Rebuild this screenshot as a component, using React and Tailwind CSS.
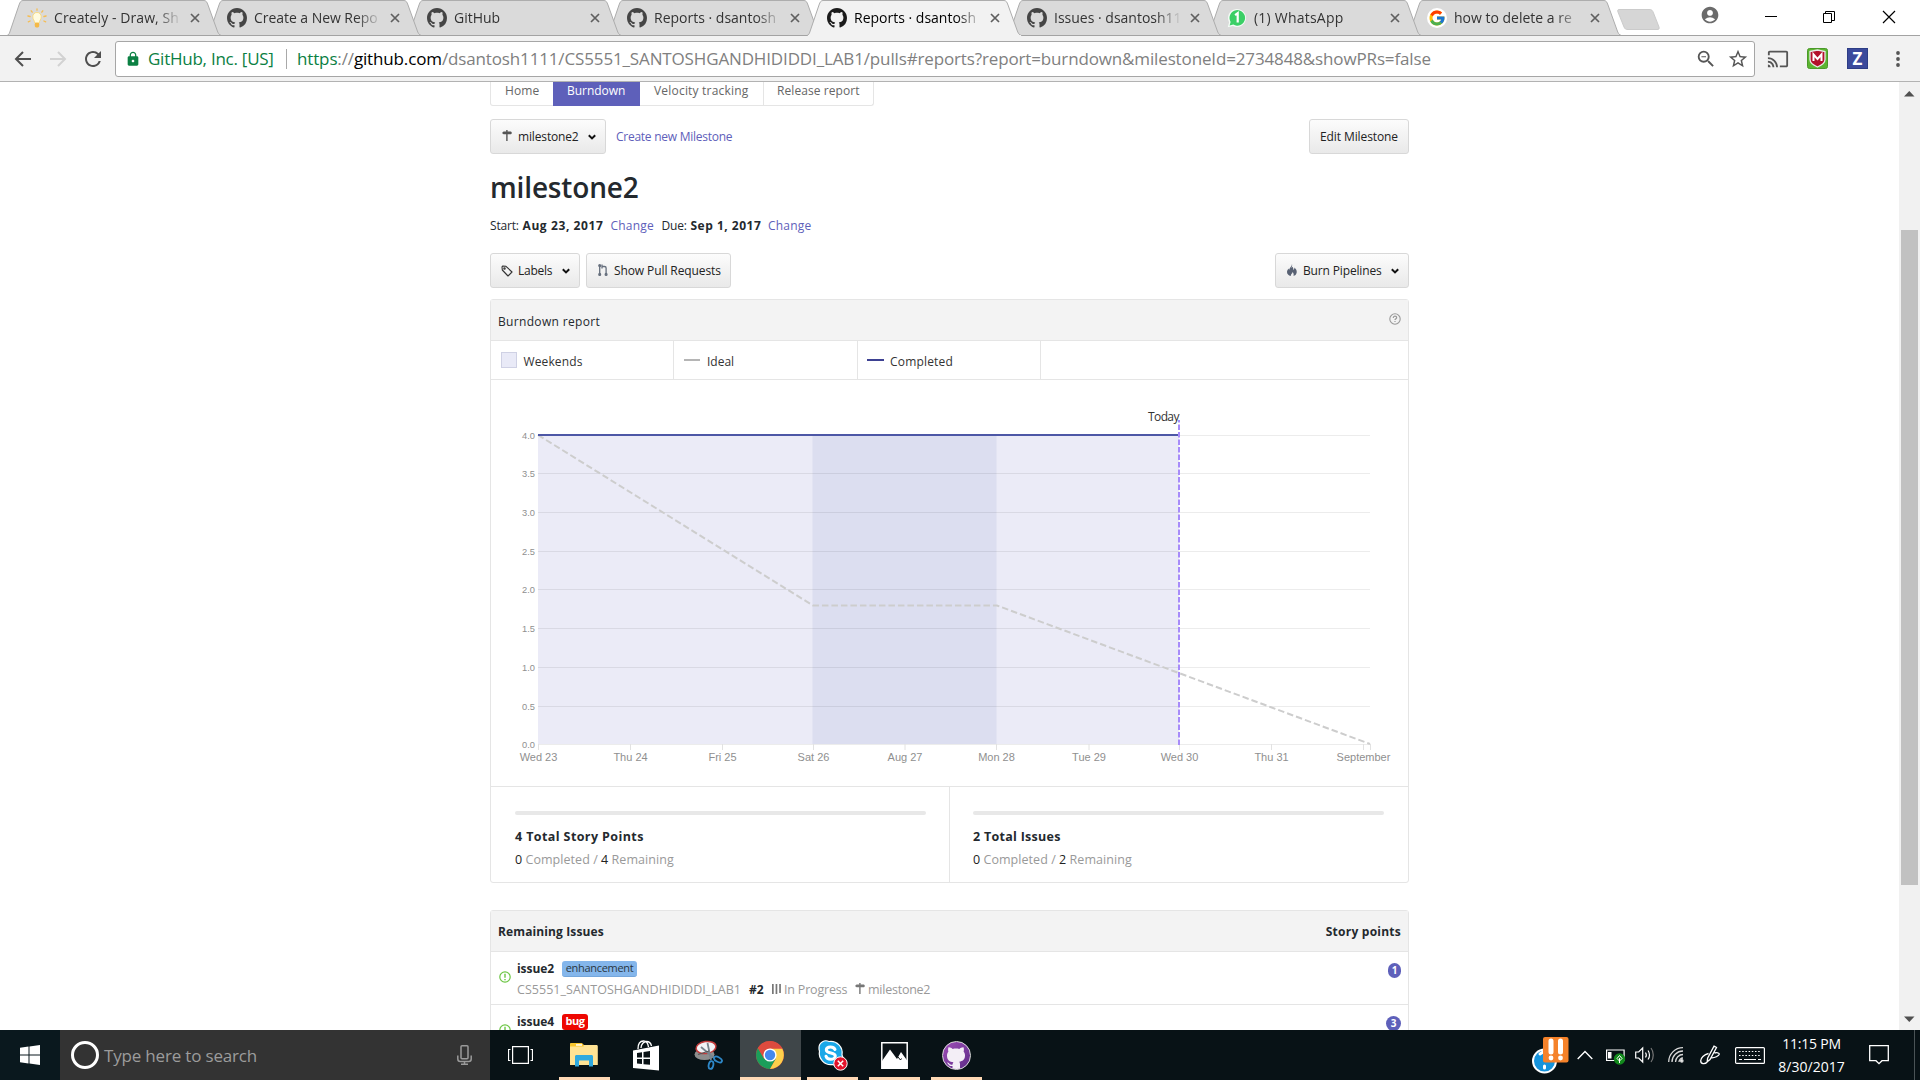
import React from 'react';
import { FcGoogle } from 'react-icons/fc';
import { MdCast, MdAccountCircle, MdLock, MdStarBorder, MdZoomOut, MdRefresh } from 'react-icons/md';

function Octocat({ className, fill = 'currentColor' }) {
  return (
    <svg viewBox="0 0 16 16" className={className} fill={fill}>
      <path d="M8 0C3.58 0 0 3.58 0 8c0 3.54 2.29 6.53 5.47 7.59.4.07.55-.17.55-.38 0-.19-.01-.82-.01-1.49-2.01.37-2.53-.49-2.69-.94-.09-.23-.48-.94-.82-1.13-.28-.15-.68-.52-.01-.53.63-.01 1.08.58 1.23.82.72 1.21 1.87.87 2.33.66.07-.52.28-.87.51-1.07-1.78-.2-3.64-.89-3.64-3.95 0-.87.31-1.59.82-2.15-.08-.2-.36-1.02.08-2.12 0 0 .67-.21 2.2.82.64-.18 1.32-.27 2-.27s1.36.09 2 .27c1.53-1.04 2.2-.82 2.2-.82.44 1.1.16 1.92.08 2.12.51.56.82 1.27.82 2.15 0 3.07-1.87 3.75-3.65 3.95.29.25.54.73.54 1.48 0 1.07-.01 1.93-.01 2.2 0 .21.15.46.55.38A8.01 8.01 0 0 0 16 8c0-4.42-3.58-8-8-8z" />
    </svg>
  );
}

function Bulb() {
  return (
    <svg viewBox="0 0 20 20" className="h-5 w-5">
      <g stroke="#f6bd52" strokeWidth="1.3" strokeLinecap="round">
        <path d="M10 .8v1.400M4.200 2.800l1 1.400M15.800 2.800l-1 1.400M.9 8l2.200.500M19.100 8l-2.200.500M1.300 13.800l1.800-.800M18.700 13.800l-1.800-.800" />
      </g>
      <path d="M10 4.500a4 4 0 0 0-4.200 4.300c0 2.600 1.700 3.600 2 6.200h4.400c.3-2.600 2-3.600 2-6.200A4 4 0 0 0 10 4.500z" fill="#fffbe0" stroke="#fbd878" strokeWidth=".9" />
      <rect x="7.800" y="14.800" width="4.400" height="4.700" rx="1.400" fill="#f5b946" />
    </svg>
  );
}

function WhatsAppBadge() {
  return (
    <svg viewBox="0 0 20 20" className="h-5 w-5">
      <path d="M.8 19.2l1.3-4.9A9 9 0 1 1 5.900 18z" fill="#f4fbf6" />
      <path d="M2.600 17.500l1-3.600a7.800 7.800 0 1 1 2.700 2.700z" fill="#3bcf66" />
      <path d="M8.100 7.200l2.600-2v9.400" fill="none" stroke="#fff" strokeWidth="2.2" />
    </svg>
  );
}

function GoogleIcon() {
  return (
    <span className="flex h-5 w-5 items-center justify-center rounded-full bg-white">
      <FcGoogle className="h-[18px] w-[18px]" />
    </span>
  );
}

const tabs = [
  { title: 'Creately - Draw, Sh', icon: <Bulb />, z: 'z-[7]', track: 'tracking-[0.08px]' },
  { title: 'Create a New Repo', icon: <Octocat className="h-5 w-5 text-[#454545]" />, z: 'z-[6]', track: 'tracking-[-0.05px]' },
  { title: 'GitHub', icon: <Octocat className="h-5 w-5 text-[#454545]" />, z: 'z-[5]', track: 'tracking-[0px]' },
  { title: 'Reports · dsantosh', icon: <Octocat className="h-5 w-5 text-[#454545]" />, z: 'z-[4]', track: 'tracking-[0px]' },
  { title: 'Reports · dsantosh', icon: <Octocat className="h-5 w-5 text-[#1b1b1b]" />, z: 'z-10', active: true, track: 'tracking-[0px]' },
  { title: 'Issues · dsantosh11', icon: <Octocat className="h-5 w-5 text-[#454545]" />, z: 'z-[3]', track: 'tracking-[0px]' },
  { title: '(1) WhatsApp', icon: <WhatsAppBadge />, z: 'z-[2]', track: 'tracking-[0.22px]' },
  { title: 'how to delete a re', icon: <GoogleIcon />, z: 'z-[1]', track: 'tracking-[0px]' },
];

function BrowserTab({ tab }) {
  return (
    <div className={`relative h-9 w-[200px] shrink-0 ${tab.z}`}>
      <svg className="absolute top-0 left-0" width="216" height="36" viewBox="0 0 216 36">
        <path
          d="M0 35.5 C2 35 2.5 33 3.5 30 L12 5 C13 2 14 .5 16 .5 L197 .5 C199 .5 200 2 201 5 L210 30 C211 33 212 35 214.5 35.5"
          fill={tab.active ? '#f2f2f2' : '#dadada'}
          stroke="#adadad"
        />
        {tab.active ? <path d="M1 35.500H214" stroke="#f2f2f2" /> : <path d="M0 35.500H215" stroke="#a3a3a3" />}
      </svg>
      <div className="relative flex h-9 items-center pl-5">
        {tab.icon}
        <div className={`ml-[7px] h-6 w-[128px] text-[14px] leading-6 whitespace-nowrap [mask-image:linear-gradient(to_right,black_80%,transparent)] ${tab.active ? 'text-black' : 'text-[#333]'} ${tab.track}`}>
          {tab.title}
        </div>
        <svg className="ml-2" width="10" height="10" viewBox="0 0 10 10">
          <path d="M1 1l8 8M9 1l-8 8" stroke="#5f5f5f" strokeWidth="1.7" />
        </svg>
      </div>
    </div>
  );
}

function TabStrip() {
  return (
    <div className="flex h-9 border-b border-[#a3a3a3] bg-white pl-[7px]">
      {tabs.map((t, i) => <BrowserTab key={i} tab={t} />)}
      <svg className="mt-[9px] ml-[10px]" width="44" height="22" viewBox="0 0 44 22">
        <path d="M2 .5H32C35 .5 35.500 1.500 36.500 4L42 18C42.500 20 42 20.500 40 20.500H11C8.500 20.500 8 20 7 18L1 3C.5 1.500 .5 .5 2 .5z" fill="#d6d6d6" stroke="#cbcbcb" />
      </svg>
      <div className="ml-[39px] flex h-8 items-start">
        <MdAccountCircle className="mt-[5px] h-5 w-5 text-[#6b6b6b]" />
        <svg className="mt-2.5 ml-[44px]" width="14" height="14" viewBox="0 0 14 14"><path d="M1 6.500h12" stroke="#000" /></svg>
        <svg className="mt-2.5 ml-11" width="14" height="14" viewBox="0 0 14 14" fill="none" stroke="#000">
          <path d="M1.500 3.500h8v9h-8zM3.500 3.500v-2h9v9h-3" />
        </svg>
        <svg className="mt-2.5 ml-[46px]" width="14" height="14" viewBox="0 0 14 14"><path d="M1 1l12 12M13 1L1 13" stroke="#000" strokeWidth="1.200" /></svg>
      </div>
    </div>
  );
}

function Toolbar() {
  return (
    <div className="flex h-[46px] items-center border-b border-[#b2b2b2] bg-[#f2f2f2] pl-[14px]">
      <svg width="18" height="16" viewBox="0 0 18 16" fill="none" stroke="#505050" strokeWidth="2"><path d="M17 8H2M9 1L2 8l7 7" /></svg>
      <svg className="ml-[17px]" width="18" height="16" viewBox="0 0 18 16" fill="none" stroke="#d2d2d2" strokeWidth="2"><path d="M1 8h15M9 1l7 7-7 7" /></svg>
      <MdRefresh className="ml-[14px] h-6 w-6 text-[#505050]" />
      <div className="ml-[10px] flex h-9 w-[1640px] items-center rounded-[3px] border border-[#a6a6a6] bg-white pl-[9px]">
        <MdLock className="h-4 w-4 text-[#0b8043]" />
        <span className="ml-[7px] w-[138px] text-[17px] tracking-[-0.25px] whitespace-nowrap text-[#0b8043]">GitHub, Inc. [US]</span>
        <span className="h-5 w-px bg-[#a9a9a9]" />
        <span className="ml-[10px] text-[17px] tracking-[-0.14px] whitespace-nowrap text-[#808080]">
          <span className="text-[#0b8043]">https</span>://<span className="text-black">github.com</span>/dsantosh1111/CS5551_SANTOSHGANDHIDIDDI_LAB1/pulls#reports?report=burndown&amp;milestoneId=2734848&amp;showPRs=false
        </span>
        <span className="ml-auto flex items-center gap-[10px] pr-[5px]">
          <MdZoomOut className="h-[22px] w-[22px] text-[#555]" />
          <MdStarBorder className="h-[22px] w-[22px] text-[#555]" />
        </span>
      </div>
      <MdCast className="ml-3 h-[22px] w-[22px] text-[#555]" />
      <svg className="ml-[18px]" width="21" height="21" viewBox="0 0 21 21">
        <rect x=".5" y=".5" width="20" height="20" rx="2" fill="#5cb531" stroke="#4b9a2a" />
        <path d="M3 3.500l7.500-1.500L18 3.500v8c0 3.500-4 6-7.500 7.500C7 17.500 3 15 3 11.500z" fill="#b3112c" stroke="#e8e8e8" strokeWidth="1.300" />
        <path d="M6.500 13V6.500l4 4.500 4-4.500V13" fill="none" stroke="#fff" strokeWidth="2" />
      </svg>
      <span className="ml-[19px] flex h-[21px] w-[21px] items-center justify-center border border-[#2d3d85] bg-[#3b4a9c] text-[17px] leading-none font-bold text-white">Z</span>
      <svg className="ml-[27px]" width="6" height="18" viewBox="0 0 6 18" fill="#555"><circle cx="3" cy="3" r="1.900" /><circle cx="3" cy="9" r="1.900" /><circle cx="3" cy="15" r="1.900" /></svg>
    </div>
  );
}

function Signpost({ className }) {
  return (
    <svg className={className} width="10" height="12" viewBox="0 0 10 12" fill="currentColor">
      <path d="M0 3l1.500-1.500H4.200V0h1.400v1.500H9L10 3 9 4.200H5.600V11H4.200V4.200H1.500z" />
    </svg>
  );
}

function Chevron({ className }) {
  return <svg className={className} width="8" height="6" viewBox="0 0 8 6" fill="none" stroke="#111" strokeWidth="2"><path d="M.8 1.200L4 4.400l3.200-3.200" /></svg>;
}

function Button({ className, children }) {
  return (
    <button className={`flex h-[35px] items-center rounded-[3px] border border-[#d8d8d8] bg-linear-to-b from-[#fcfcfc] to-[#e9e9e9] text-[12px] font-medium whitespace-nowrap text-[#222] ${className}`}>
      {children}
    </button>
  );
}

const days = [
  [538.5, 'Wed 23'], [630.5, 'Thu 24'], [722.5, 'Fri 25'], [813.5, 'Sat 26'], [905, 'Aug 27'],
  [996.5, 'Mon 28'], [1089, 'Tue 29'], [1179.5, 'Wed 30'], [1271.5, 'Thu 31'], [1363.5, 'September'],
];
const levels = [
  ['4.0', 435.5], ['3.5', 473.5], ['3.0', 512.5], ['2.5', 551.5], ['2.0', 589.5],
  ['1.5', 628.5], ['1.0', 667.5], ['0.5', 706.5], ['0.0', 744.5],
];

function BurndownChart() {
  return (
    <svg className="block" width="917" height="406" viewBox="491 380 917 406">
      <rect x="538" y="435" width="641" height="309" fill="#ebebf7" />
      <rect x="812.500" y="435" width="184" height="309" fill="#dcdef0" />
      {levels.map(([l, y]) => (
        <g key={l}>
          <path d={`M538 ${y}H1370`} stroke="#000" strokeOpacity=".075" />
          <text x="535" y={y + 3.5} textAnchor="end" fontSize="9.300" fill="#8f8f8f" fontFamily="Liberation Sans, sans-serif">{l}</text>
        </g>
      ))}
      {days.map(([x, d]) => (
        <g key={d}>
          <path d={`M${x} 744v6`} stroke="#e2e2e2" />
          <text x={x} y="761" textAnchor="middle" fontSize="11" fill="#8f8f8f" fontFamily="Liberation Sans, sans-serif">{d}</text>
        </g>
      ))}
      <path d="M1370.500 744v6" stroke="#e2e2e2" />
      <path d="M538 435L813 605.500H997L1370 744" fill="none" stroke="#cdcdcd" strokeWidth="2" strokeDasharray="6.500 3" />
      <path d="M538 435H1180" stroke="#4d57a6" strokeWidth="2" />
      <path d="M1179 420V745" stroke="#a78bfa" strokeWidth="2" strokeDasharray="5.500 2" strokeDashoffset="3" />
      <text x="1148" y="421" fontSize="12" letterSpacing="-.6" fill="#333" fontFamily="Open Sans, sans-serif">Today</text>
    </svg>
  );
}

function Stat({ title, track, remaining, className }) {
  return (
    <div className={`pt-6 ${className}`}>
      <div className="h-1 rounded-full bg-[#e8e8e8]" />
      <div className={`mt-[13px] text-[12.5px] leading-[18px] font-bold text-[#24292e] ${track}`}>{title}</div>
      <div className="mt-[5px] text-[12.5px] leading-[18px] tracking-[0.05px] text-[#999]">
        <span className="font-medium text-[#222]">0</span> Completed / <span className="font-medium text-[#222]">{remaining}</span> Remaining
      </div>
    </div>
  );
}

function OpenIcon() {
  return (
    <svg width="12" height="12" viewBox="0 0 12 12" fill="none" stroke="#6cc644"><circle cx="6" cy="6" r="5.200" strokeWidth="1.200" /><path d="M6 2.800v4M6 7.900v1.400" strokeWidth="1.400" /></svg>
  );
}

function Issue({ name, badge, badgeClass, number, points, pointClass }) {
  return (
    <div className="flex h-[53px] shrink-0 border-b border-[#e5e5e5] pt-2 pr-[7px] pl-2">
      <div className="w-[18px] pt-[11px]"><OpenIcon /></div>
      <div>
        <div className="flex h-[17px] items-center text-[12px] font-bold text-[#24292e]">
          <span className="w-[45px] tracking-[-0.07px]">{name}</span>
          <span className={`flex h-4 items-center justify-center rounded-[3px] text-[11px] ${badgeClass}`}>{badge}</span>
        </div>
        <div className="mt-[4px] flex h-[18px] items-center text-[12.5px] whitespace-nowrap text-[#999]">
          <span className="w-[232px] tracking-[0.03px]">CS5551_SANTOSHGANDHIDIDDI_LAB1</span>
          <span className="w-[23px] text-[12px] font-bold text-[#24292e]">{number}</span>
          <svg className="mb-0.5" width="9" height="10" viewBox="0 0 9 10" fill="#777"><path d="M0 0h1.700v10H0zM3.600 0h1.700v10H3.600zM7.200 0h1.700v9H7.200z" /></svg>
          <span className="ml-[3px] w-[71px] tracking-[-0.19px]">In Progress</span>
          <Signpost className="mb-0.5 text-[#777]" />
          <span className="ml-[3px] tracking-[-0.24px]">milestone2</span>
        </div>
      </div>
      <span className={`mt-[3px] ml-auto flex h-[15px] items-center justify-center rounded-full bg-[#5e60ba] text-[10px] font-bold text-white ${pointClass}`}>{points}</span>
    </div>
  );
}

function Page() {
  return (
    <main className="ml-[490px] flex h-full w-[919px] flex-col">
      <div className="flex h-6 w-[384px] shrink-0 rounded-b-[3px] border border-t-0 border-[#e5e5e5] text-[12px] leading-[18px] text-[#666]">
        <span className="w-[62px] pl-[14px] tracking-[0.14px]">Home</span>
        <span className="h-6 w-[87px] bg-[#5e60ba] pl-[14px] font-medium tracking-[-0.04px] text-white">Burndown</span>
        <span className="w-[124px] border-r border-[#e5e5e5] pl-[14px] tracking-[0.2px]">Velocity tracking</span>
        <span className="pl-[13px] tracking-[0.08px]">Release report</span>
      </div>

      <div className="mt-[13px] flex shrink-0 items-center">
        <Button className="w-[116px] pt-px pl-[11px]">
          <Signpost className="mb-0.5 text-[#555]" />
          <span className="ml-[6px] w-[70px] text-left tracking-[-0.15px]">milestone2</span>
          <Chevron />
        </Button>
        <span className="mt-px ml-2.5 text-[12px] tracking-[-0.26px] text-[#5e60ba]">Create new Milestone</span>
        <Button className="ml-auto w-[100px] justify-center pt-px tracking-[-0.1px]">Edit Milestone</Button>
      </div>

      <h1 className="mt-[13px] h-10 shrink-0 text-[28px] leading-10 font-semibold tracking-[-0.15px] text-[#24292e]">milestone2</h1>

      <div className="mt-[10px] flex h-[18px] shrink-0 items-center text-[12px] whitespace-nowrap text-[#24292e]">
        <span className="w-[32.500px] tracking-[-0.19px]">Start:</span>
        <span className="w-[88px] font-bold tracking-[0.6px]">Aug 23, 2017</span>
        <span className="w-[51px] tracking-[0.22px] text-[#5e60ba]">Change</span>
        <span className="w-[29px] tracking-[-0.17px]">Due:</span>
        <span className="w-[77.500px] font-bold tracking-[0.5px]">Sep 1, 2017</span>
        <span className="tracking-[0.22px] text-[#5e60ba]">Change</span>
      </div>

      <div className="mt-[18px] flex shrink-0 items-center">
        <Button className="w-[90px] pl-[10px]">
          <svg width="12" height="12" viewBox="0 0 12 12" fill="none" stroke="#333" strokeWidth="1.100"><path d="M1 1.800L1.300 5l5.700 6 4-4-6-5.700-3.200-.3z" strokeLinejoin="round" /><circle cx="3.500" cy="3.500" r=".7" /></svg>
          <span className="ml-[5px] w-[44px] text-left tracking-[-0.25px]">Labels</span>
          <Chevron />
        </Button>
        <Button className="ml-1.5 w-[145px] pl-[11px]">
          <svg className="mb-0.5" width="10" height="12" viewBox="0 0 10 12" fill="none" stroke="#666f7d" strokeWidth="1.300"><path d="M1.700 1v10.500M4 .5v4M4 2.500h2.500c1 0 1.600.6 1.600 1.600V11" /><circle cx="1.700" cy="1.600" r=".9" /><circle cx="1.700" cy="10.400" r=".9" /><circle cx="8.100" cy="10.400" r=".9" /></svg>
          <span className="ml-[6px] tracking-[-0.1px]">Show Pull Requests</span>
        </Button>
        <Button className="ml-auto w-[134px] pl-[11px]">
          <svg className="mb-0.5" width="10" height="12" viewBox="0 0 10 12" fill="#586173"><path d="M5 0c.5 2-.3 3-.6 3.900.5-.2.900-.6 1-1.200C6.500 3.500 6.300 5 6.200 6 7 5.500 7.500 4.500 7.500 3.500 9 5 10 6.500 9.700 8.500 9.400 10.500 8 11.700 6.500 12 7 10.500 6.500 9 5.500 8 5.500 9.500 4 9.500 3.700 12 1.500 11.500 0 10 0 8c0-1.500 1-2.500 1.500-3.500.2.700.3 1 .7 1.300C2.500 3.500 5 2.500 5 0z" /></svg>
          <span className="ml-[6px] w-[88px] text-left tracking-[-0.15px]">Burn Pipelines</span>
          <Chevron />
        </Button>
      </div>

      <section className="mt-[11px] h-[584px] shrink-0 rounded-[3px] border border-[#e5e5e5]">
        <div className="flex h-[41px] items-center justify-between border-b border-[#e5e5e5] bg-[#f3f3f3] px-[7px] pt-1 text-[12px] font-medium tracking-[0.33px] text-[#24292e]">
          Burndown report
          <svg className="mb-[6px]" width="12" height="12" viewBox="0 0 12 12" fill="none" stroke="#999"><circle cx="6" cy="6" r="5.200" strokeWidth="1.100" /><path d="M4.300 4.900c0-1.200.7-1.700 1.700-1.700s1.700.6 1.700 1.500c0 1-1.700 1.100-1.700 2.300M6 7.900v1.200" strokeWidth="1.200" /></svg>
        </div>
        <div className="flex h-[39px] border-b border-[#e5e5e5] text-[12px] text-[#333]">
          <div className="flex w-[183px] items-center border-r border-[#e5e5e5] pl-2.5">
            <span className="h-4 w-4 border border-[#cfd1e4] bg-[#e9eaf7]" />
            <span className="mt-[3px] ml-[6.500px] tracking-[0.12px]">Weekends</span>
          </div>
          <div className="flex w-[184px] items-center border-r border-[#e5e5e5] pl-2.5">
            <span className="h-0.5 w-4 bg-[#b5b5b5]" />
            <span className="mt-[3px] ml-[7px]">Ideal</span>
          </div>
          <div className="flex w-[183px] items-center border-r border-[#e5e5e5] pl-[9px]">
            <span className="h-0.5 w-[17px] bg-[#3d4192]" />
            <span className="mt-[3px] ml-[6px] tracking-[0.18px]">Completed</span>
          </div>
        </div>
        <BurndownChart />
        <div className="flex h-[96px] border-t border-[#e5e5e5]">
          <Stat title="4 Total Story Points" track="tracking-[0.4px]" remaining="4" className="w-[459px] border-r border-[#e5e5e5] pr-[23px] pl-6" />
          <Stat title="2 Total Issues" track="tracking-[0.28px]" remaining="2" className="flex-1 pr-6 pl-[23px]" />
        </div>
      </section>

      <section className="mt-[27px] flex h-[160px] shrink-0 flex-col rounded-[3px] border border-[#e5e5e5]">
        <div className="flex h-[41px] shrink-0 items-center justify-between border-b border-[#e5e5e5] bg-[#f3f3f3] px-[7px] pt-0.5 text-[12px] font-bold text-[#24292e]">
          <span className="tracking-[0.12px]">Remaining Issues</span>
          <span className="tracking-[0.24px]">Story points</span>
        </div>
        <Issue name="issue2" badge="enhancement" number="#2" points="1" badgeClass="bg-[#84b6eb] w-[75px] font-normal tracking-[-0.3px] text-[#2b3640] border-b border-[#74a6db]" pointClass="w-[13px]" />
        <Issue name="issue4" badge="bug" number="#4" points="3" badgeClass="bg-[#ee0701] w-[26px] text-white tracking-[-0.5px]" pointClass="w-[15px]" />
      </section>
    </main>
  );
}

function Scrollbar() {
  return (
    <div className="ml-auto flex w-[21px] flex-col items-center bg-[#f1f1f1]">
      <svg className="mt-[9px] block" width="11" height="6" viewBox="0 0 11 6"><path d="M0 5.500h10.500L5.300 0z" fill="#505050" /></svg>
      <div className="mt-[133px] h-[655px] w-[17px] bg-[#c1c1c1]" />
      <svg className="mt-[131px] block" width="11" height="6" viewBox="0 0 11 6"><path d="M0 .5h10.500L5.300 6z" fill="#505050" /></svg>
    </div>
  );
}

function AppSlot({ children, active, running }) {
  return (
    <div className={`relative mr-px flex h-[50px] w-[61px] items-center justify-center pr-px ${active ? 'bg-[#3f4649]' : ''}`}>
      {children}
      {running && <span className={`absolute bottom-0 h-[3px] bg-[#ffd9b5] ${active ? 'left-0 w-[61px]' : 'left-[5px] w-[51px]'}`} />}
    </div>
  );
}

const ExplorerIcon = () => (
  <svg width="28" height="24" viewBox="0 0 28 24">
    <path d="M0 1.500C0 .8.500 0 1.300 0h10.400l2 2H26.500c.800 0 1.300.600 1.300 1.400V22H0z" fill="#ffe394" />
    <path d="M0 1.500C0 .8.500 0 1.300 0h10.400l2 2v1.500H0z" fill="#f7c52d" />
    <path d="M6 1.200h6v1.500H6z" fill="#fff" />
    <path d="M5 23.500V13.500c0-.9.600-1.500 1.500-1.500h15c.9 0 1.500.6 1.500 1.500v10h-4v-6h-10v6z" fill="#2fa9df" />
  </svg>
);
const StoreIcon = () => (
  <svg width="26" height="31" viewBox="0 0 26 31">
    <path d="M5 9C5 3.500 7.500 1 10.500 1S15 3.500 15.500 7M8 8c0-4 3-6.500 5.500-6.500S18 3.500 18.500 6" fill="none" stroke="#fff" strokeWidth="1.300" />
    <path d="M0 10.500L26 5.500V30.500L0 28z" fill="#fff" />
    <path d="M4 13l5-.8v5.300H4zM10.500 12l6.500-1v6.500h-6.500zM4 19h5v5l-5-.4zM10.500 19H17v5.800l-6.500-.6z" fill="#0a1216" />
  </svg>
);
const SnipIcon = () => (
  <svg width="29" height="30" viewBox="0 0 29 30">
    <ellipse cx="10.500" cy="14.500" rx="10" ry="5.500" fill="#8d8d8d" />
    <ellipse cx="12" cy="7.500" rx="10" ry="6" fill="#f2f2f5" stroke="#c33b3b" strokeWidth="1.500" transform="rotate(-8 12 7.500)" />
    <path d="M7 7l13 11M13.500 3l3.500 17" stroke="#79838c" strokeWidth="1.800" />
    <path d="M4 14.500l11-3.500" stroke="#555" strokeWidth="1.200" />
    <ellipse cx="24" cy="19.500" rx="4.300" ry="2.300" fill="none" stroke="#2e88c9" strokeWidth="1.800" transform="rotate(28 24 19.500)" />
    <ellipse cx="17" cy="25" rx="2.300" ry="4" fill="none" stroke="#2e88c9" strokeWidth="1.800" transform="rotate(12 17 25)" />
  </svg>
);
const ChromeIcon = () => (
  <svg width="28" height="28" viewBox="0 0 28 28">
    <circle cx="14" cy="14" r="14" fill="#dd4b3e" />
    <path d="M1.900 7A14 14 0 0 0 14 28l6-10.500-6-3.500-6 3.500z" fill="#1b9e5a" />
    <path d="M26.200 7.500H14v6.500l6 3.500L14 28A14 14 0 0 0 26.200 7.500z" fill="#fdd04b" />
    <path d="M1.900 7L8 17.500 14 7.500h12.200A14 14 0 0 0 1.900 7z" fill="#dd4b3e" />
    <circle cx="14" cy="14" r="6.600" fill="#fff" />
    <circle cx="14" cy="14" r="5.200" fill="#4488ee" />
  </svg>
);
const SkypeIcon = () => (
  <svg width="32" height="32" viewBox="0 0 32 32">
    <g fill="#1ba8e8" stroke="#fff" strokeWidth="1.200"><path d="M3 9a7 7 0 0 1 10-6.500A11.500 11.500 0 0 1 26 16a7 7 0 0 1-9.500 9.500A11.500 11.500 0 0 1 3.500 12 7 7 0 0 1 3 9z" /></g>
    <path d="M19 10.500C18 8.500 16.500 8 14.500 8 12 8 10.300 9 10.300 11c0 4.200 9 2 9 6 0 2-2 3.300-4.500 3.300-2.300 0-4.200-1-4.800-3" fill="none" stroke="#fff" strokeWidth="3" strokeLinecap="round" />
    <circle cx="24.500" cy="24.500" r="6.700" fill="#e2122a" stroke="#fff" />
    <path d="M21.800 21.800l5.400 5.400M27.200 21.800l-5.400 5.400" stroke="#fff" strokeWidth="1.500" />
  </svg>
);
const PhotosIcon = () => (
  <svg width="27" height="27" viewBox="0 0 27 27"><path d="M.8.800h25.400v25.400H.8z" fill="#0a1216" stroke="#fff" strokeWidth="1.500" /><path d="M1 19L9 7.500l7 9.500 4-7 6.500 9V26H1z" fill="#fff" /><path d="M17 15l2.500 3 1-1.500" fill="none" stroke="#0a1216" /></svg>
);
const GitHubDesktopIcon = () => (
  <span className="flex h-[29px] w-[29px] items-end justify-center overflow-hidden rounded-full border border-[#ddd] bg-linear-to-br from-[#a04fb8] to-[#5d2a86]">
    <svg width="22" height="23" viewBox="0 0 22 23" fill="#f3eef6"><path d="M3.500 1.200C5 1 6.500 2 7.700 2.900c2.200-.5 4.400-.5 6.600 0C15.500 2 17 1 18.500 1.200c.600 1.600.500 3.200.1 4.300 1 1.200 1.500 2.600 1.400 4.200-.1 4-2.500 5.400-5.700 6 .6.900.7 1.700.7 2.800V23H7.500v-3c-2.500.4-3.500-.7-4.500-2.300l-1.200-1.200c1.700-.2 2.400 1 3.200 1.700.8.600 1.600.5 2.600.2.100-1 .4-1.700.9-2.100C4.500 15.700 2 14 2 9.700c0-1.600.5-3 1.400-4.200-.4-1.100-.5-2.700.1-4.300z" /></svg>
  </span>
);

function Taskbar() {
  return (
    <footer className="flex h-[50px] items-center bg-[#081216]">
      <div className="flex h-[50px] w-[60px] items-center justify-center bg-[#0a181e]">
        <svg width="20" height="20" viewBox="0 0 20 20" fill="#fff"><path d="M0 2.800L8.500 1.600V9.500H0zM9.500 1.500L20 0v9.500H9.500zM0 10.500h8.500v8L0 17.300zM9.500 10.500H20V20L9.500 18.600z" /></svg>
      </div>
      <div className="flex h-[50px] w-[430px] items-center bg-[#333] pr-[18px] pl-[11px]">
        <span className="h-7 w-7 rounded-full border-[3.500px] border-white" />
        <span className="mt-0.5 ml-[5px] text-[17px] tracking-[-0.180px] text-[#9c9c9c]">Type here to search</span>
        <svg className="ml-auto" width="15" height="20" viewBox="0 0 15 20" fill="none" stroke="#9a9a9a" strokeWidth="1.500"><rect x="4" y=".8" width="7" height="13" rx="1" /><path d="M.8 10.500V14c0 1.500 1 2.500 2.500 2.500h8.400c1.500 0 2.500-1 2.500-2.500v-3.500M7.500 16.500v3M4 19.300h7" /></svg>
      </div>
      <div className="mr-1 flex w-[60px] justify-center">
        <svg width="25" height="18" viewBox="0 0 25 18" fill="none" stroke="#fff" strokeWidth="1.200"><path d="M4.600.6h15.800v16.800H4.600zM2.500 3.500h-2v11h2M22.500 3.500h2v11h-2" /></svg>
      </div>
      <AppSlot running><ExplorerIcon /></AppSlot>
      <AppSlot><StoreIcon /></AppSlot>
      <AppSlot><SnipIcon /></AppSlot>
      <AppSlot running active><ChromeIcon /></AppSlot>
      <AppSlot running><SkypeIcon /></AppSlot>
      <AppSlot running><PhotosIcon /></AppSlot>
      <AppSlot running><GitHubDesktopIcon /></AppSlot>

      <div className="ml-auto flex h-[50px] items-center pr-[5px]">
        <svg width="37" height="38" viewBox="0 0 37 38">
          <circle cx="12.500" cy="25" r="11.500" fill="#1593dc" stroke="#fff" strokeWidth="2" />
          <path d="M8 18l3-2M12.500 30v2" stroke="#fff" strokeWidth="3" strokeLinecap="round" />
          <rect x="11" y="1" width="25.500" height="25.500" rx="2" fill="#f5822a" />
          <path d="M19 5v11M28.500 5v11" stroke="#fff" strokeWidth="5" strokeLinecap="round" />
          <circle cx="19" cy="22" r="2.400" fill="#fff" /><circle cx="28.500" cy="22" r="2.400" fill="#fff" />
        </svg>
        <svg className="ml-2" width="16" height="10" viewBox="0 0 16 10" fill="none" stroke="#fff" strokeWidth="1.400"><path d="M.7 9L8 1.500 15.300 9" /></svg>
        <svg className="mt-[3px] ml-[13px]" width="20" height="16" viewBox="0 0 20 16"><path d="M.6 1h17.500v10.500H.6z" fill="none" stroke="#fff" strokeWidth="1.200" /><path d="M2 3h3.500v6.500H2z" fill="#fff" /><circle cx="13.500" cy="10" r="5.700" fill="#128a1c" /><path d="M13.500 6.500l2.500 3-2.500 2.500L11 9.500zM13.500 9v5" fill="none" stroke="#fff" /></svg>
        <svg className="ml-[9px]" width="20" height="18" viewBox="0 0 20 18" fill="none" stroke="#fff" strokeWidth="1.200"><path d="M.7 6h3l4-4v14l-4-4h-3z" /><path d="M10.500 6.500c1 1.500 1 3.500 0 5M13 4.500c2 2.500 2 6.500 0 9" /><path d="M16 2c3 4 3 10 0 14" stroke="#777" /></svg>
        <svg className="ml-[13px]" width="16" height="16" viewBox="0 0 16 16" fill="none" stroke="#d8d8d8" strokeWidth="1.300"><path d="M.7 15C.7 7 7 .7 15 .7M4 15C4 9 9 4 15 4M7.500 15c0-4 3.500-7.500 7.500-7.500M11 15c0-2.200 1.800-4 4-4" /><circle cx="13.800" cy="13.800" r="1.200" fill="#fff" /></svg>
        <svg className="ml-4" width="20" height="20" viewBox="0 0 20 20" fill="none" stroke="#fff" strokeWidth="1.300"><path d="M14 1.200l2.500 1.300-6.500 12-2.800 2.300.4-3.700zM8.500 8.500C4 9.500.7 13 .7 15.800c0 3.500 4.300 3.700 6.500 1.200M11.500 12.800c3 .2 7.500-1.800 7.800-3.600.2-1.600-2.800-1.700-4.800-1.200" /></svg>
        <svg className="ml-[15px]" width="30" height="17" viewBox="0 0 30 17" fill="none" stroke="#fff" strokeWidth="1.200"><rect x=".6" y=".6" width="28.800" height="15.800" rx="1" /><path d="M4 4.500h22M4 8.500h22" strokeDasharray="1.500 1.700" /><path d="M4 12.500h3M9 12.500h12M23 12.500h3" /></svg>
        <div className="ml-[13px] w-[67px] text-center text-[14px] leading-[23px] whitespace-nowrap text-white">
          <div className="tracking-[-0.200px]">11:15 PM</div>
          <div>8/30/2017</div>
        </div>
        <svg className="ml-6" width="20" height="20" viewBox="0 0 20 20" fill="none" stroke="#fff" strokeWidth="1.300"><path d="M.7.700h18.600v15h-6.300l-3 3-3-3H.7z" /></svg>
        <span className="ml-[25px] h-[50px] w-px bg-[#4a5356]" />
      </div>
    </footer>
  );
}

export default function App() {
  return (
    <div className="flex h-[1080px] w-[1920px] flex-col overflow-hidden bg-white font-['Open_Sans','Noto_Sans',sans-serif]">
      <TabStrip />
      <Toolbar />
      <div className="flex h-[948px] overflow-hidden">
        <Page />
        <Scrollbar />
      </div>
      <Taskbar />
    </div>
  );
}
